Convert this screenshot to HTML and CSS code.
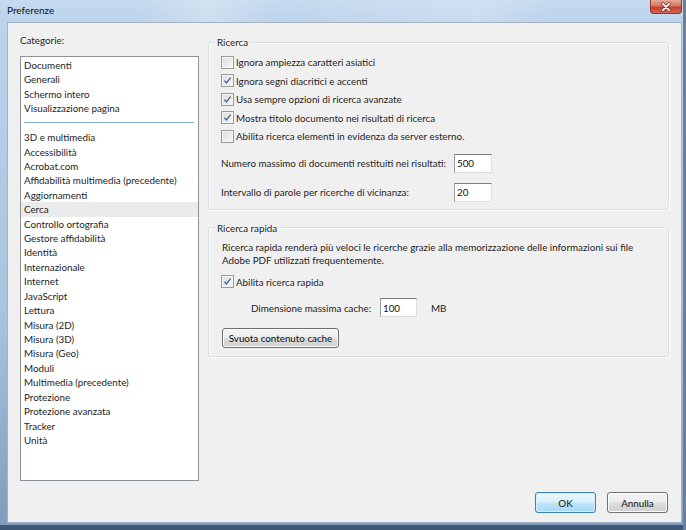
FILE: index.html
```html
<!DOCTYPE html>
<html>
<head>
    <link rel="stylesheet" href="styles.css">
</head>
<body>
<div class="window">
    <div class="titlebar">
        <span class="title">Preferenze</span>
        <button class="close">
            <svg width="32" height="14" viewBox="0 0 32 14">
                <path d="M12.5 3.5 L19.5 10.5 M19.5 3.5 L12.5 10.5" stroke="#7a2a20" stroke-width="3.4" stroke-linecap="round"/>
                <path d="M12.5 3.5 L19.5 10.5 M19.5 3.5 L12.5 10.5" stroke="#ffffff" stroke-width="1.8" stroke-linecap="round"/>
            </svg>
        </button>
    </div>
    <div class="client">
        <div class="main">
            <div class="sidebar">
                <div class="label">Categorie:</div>
                <ul class="list">
                    <li>Documenti</li>
                    <li>Generali</li>
                    <li>Schermo intero</li>
                    <li>Visualizzazione pagina</li>
                    <li class="sep"></li>
                    <li>3D e multimedia</li>
                    <li>Accessibilità</li>
                    <li>Acrobat.com</li>
                    <li>Affidabilità multimedia (precedente)</li>
                    <li>Aggiornamenti</li>
                    <li class="selected">Cerca</li>
                    <li>Controllo ortografia</li>
                    <li>Gestore affidabilità</li>
                    <li>Identità</li>
                    <li>Internazionale</li>
                    <li>Internet</li>
                    <li>JavaScript</li>
                    <li>Lettura</li>
                    <li>Misura (2D)</li>
                    <li>Misura (3D)</li>
                    <li>Misura (Geo)</li>
                    <li>Moduli</li>
                    <li>Multimedia (precedente)</li>
                    <li>Protezione</li>
                    <li>Protezione avanzata</li>
                    <li>Tracker</li>
                    <li>Unità</li>
                </ul>
            </div>
            <div class="panels">
                <fieldset class="group">
                    <legend>Ricerca</legend>
                    <div class="checks">
                        <div class="check"><span class="box"></span>Ignora ampiezza caratteri asiatici</div>
                        <div class="check"><span class="box checked"><svg width="11" height="11" viewBox="0 0 11 11"><path d="M2.4 5.6 L4.4 8 L8.6 2.6" fill="none" stroke="#4a64a0" stroke-width="1.4"/></svg></span>Ignora segni diacritici e accenti</div>
                        <div class="check"><span class="box checked"><svg width="11" height="11" viewBox="0 0 11 11"><path d="M2.4 5.6 L4.4 8 L8.6 2.6" fill="none" stroke="#4a64a0" stroke-width="1.4"/></svg></span>Usa sempre opzioni di ricerca avanzate</div>
                        <div class="check"><span class="box checked"><svg width="11" height="11" viewBox="0 0 11 11"><path d="M2.4 5.6 L4.4 8 L8.6 2.6" fill="none" stroke="#4a64a0" stroke-width="1.4"/></svg></span>Mostra titolo documento nei risultati di ricerca</div>
                        <div class="check"><span class="box"></span>Abilita ricerca elementi in evidenza da server esterno.</div>
                    </div>
                    <div class="field first">
                        <span>Numero massimo di documenti restituiti nei risultati:</span>
                        <input class="text" value="500">
                    </div>
                    <div class="field">
                        <span>Intervallo di parole per ricerche di vicinanza:</span>
                        <input class="text" value="20">
                    </div>
                </fieldset>
                <fieldset class="group rapid">
                    <legend>Ricerca rapida</legend>
                    <p class="desc">Ricerca rapida renderà più veloci le ricerche grazie alla memorizzazione delle informazioni sui file<br>Adobe PDF utilizzati frequentemente.</p>
                    <div class="check"><span class="box checked"><svg width="11" height="11" viewBox="0 0 11 11"><path d="M2.4 5.6 L4.4 8 L8.6 2.6" fill="none" stroke="#4a64a0" stroke-width="1.4"/></svg></span>Abilita ricerca rapida</div>
                    <div class="cache">
                        <span class="cache-label">Dimensione massima cache:</span>
                        <input class="text" value="100">
                        <span class="unit">MB</span>
                    </div>
                    <button class="btn clear">Svuota contenuto cache</button>
                </fieldset>
            </div>
        </div>
        <div class="footer">
            <button class="btn default">OK</button>
            <button class="btn">Annulla</button>
        </div>
    </div>
</div>
</body>
</html>
```

FILE: styles.css
```css
body {
    margin: 0;
    font-family: Lato, "Noto Sans", sans-serif;
    font-size: 9.8px;
    color: #1e1e1e;
}
.window {
    width: 686px;
    height: 530px;
    box-sizing: border-box;
    padding: 0 4px 7px 7px;
    display: flex;
    flex-direction: column;
    background: linear-gradient(to bottom, #c6daef 0, #bcd3eb 22px, #a9c2df 60%, #7f9bbd 100%);
    box-shadow: inset -3px 0 0 #6a7f99, inset 0 -5px 0 #3e5878;
}
.titlebar {
    height: 22px;
    display: flex;
    justify-content: space-between;
    align-items: flex-start;
    background: linear-gradient(100deg, rgba(255,255,255,0) 20%, rgba(255,255,255,0.25) 30%, rgba(255,255,255,0) 40%, rgba(255,255,255,0.2) 70%, rgba(255,255,255,0) 80%);
}
.title {
    padding-top: 3px;
    line-height: 14px;
    font-size: 10px;
    color: #111;
}
.close {
    width: 32px;
    height: 14px;
    padding: 0;
    border: 1px solid #8a3a30;
    border-top: none;
    border-radius: 0 0 4px 4px;
    background: linear-gradient(to bottom, #e8a89c 0, #d77764 45%, #c4402b 55%, #d2674f 100%);
    display: flex;
}
.client {
    flex: 1;
    display: flex;
    flex-direction: column;
    background: #f0f0f0;
    border: 1px solid #a3b2c4;
}
.main {
    display: flex;
    padding: 10px 0 0 12px;
    gap: 9px;
}
.sidebar {
    width: 179px;
}
.label {
    line-height: 14px;
    margin-bottom: 9px;
}
.list {
    margin: 0;
    padding: 1px 0;
    list-style: none;
    height: 425px;
    box-sizing: border-box;
    background: #fff;
    border: 1px solid #8e939b;
}
.list li {
    line-height: 14.43px;
    height: 14.43px;
    padding-left: 3px;
    white-space: nowrap;
}
.list li.selected {
    background: #ebebeb;
}
.list li.sep {
    display: flex;
    align-items: center;
    padding: 0 4px 0 3px;
}
.list li.sep::after {
    content: "";
    flex: 1;
    height: 1px;
    background: #7fa8cb;
}
.panels {
    margin-top: 2px;
    width: 461px;
}
.group {
    margin: 0;
    padding: 0 12px 7px;
    border: 1px solid #d5dfe5;
    border-radius: 3px;
    box-shadow: inset 1px 1px 0 #fff, 1px 1px 0 #fff;
    min-width: 0;
}
.group legend {
    padding: 0 1px;
    margin-left: -5px;
    line-height: 14px;
}
.checks {
    padding-top: 4px;
}
.check {
    display: flex;
    align-items: center;
    height: 18.5px;
    gap: 2px;
}
.box {
    width: 13px;
    height: 13px;
    box-sizing: border-box;
    border: 1px solid #9a9a9a;
    background: linear-gradient(135deg, #dcdcdc 0, #f0f0f0 70%, #fafafa 100%);
    box-shadow: inset 0 0 0 1px #f6f6f6;
    display: flex;
    align-items: center;
    justify-content: center;
}
.field {
    display: grid;
    grid-template-columns: 233px 38px;
    align-items: center;
    margin-top: 10px;
}
.field.first {
    margin-top: 8px;
}
.text {
    width: 38px;
    height: 19px;
    box-sizing: border-box;
    padding: 0 2px;
    font: inherit;
    color: #111;
    background: #fff;
    border: 1px solid #dcdfe3;
    border-top-color: #7d7d7d;
    border-left-color: #9a9a9a;
    outline: none;
}
.rapid {
    margin-top: 11px;
    padding-bottom: 8px;
}
.desc {
    margin: 6px 0 0 1px;
    line-height: 13.5px;
}
.rapid .check {
    margin-top: 5px;
}
.cache {
    display: flex;
    align-items: center;
    margin: 7px 0 0 30px;
}
.cache-label {
    width: 129px;
}
.cache .text {
    width: 37px;
}
.unit {
    margin-left: 14px;
}
.btn {
    height: 21px;
    padding: 0;
    font: inherit;
    color: #111;
    border: 1px solid #707070;
    border-radius: 3px;
    background: linear-gradient(to bottom, #f4f4f4 0, #ececec 48%, #dddddd 52%, #d0d0d0 100%);
    box-shadow: inset 0 0 0 1px #fbfbfb;
}
.clear {
    display: block;
    width: 117px;
    height: 20px;
    margin: 11px 0 0 1px;
}
.footer {
    display: flex;
    justify-content: flex-end;
    gap: 11px;
    margin-top: 11px;
    padding-right: 13px;
}
.footer .btn {
    width: 61px;
}
.btn.default {
    border-color: #3c7fb1;
    background: linear-gradient(to bottom, #eaf6fd 0, #d9f0fc 48%, #bee6fd 52%, #a7d9f5 100%);
    box-shadow: inset 0 0 0 1px #d6eefb;
}
```
